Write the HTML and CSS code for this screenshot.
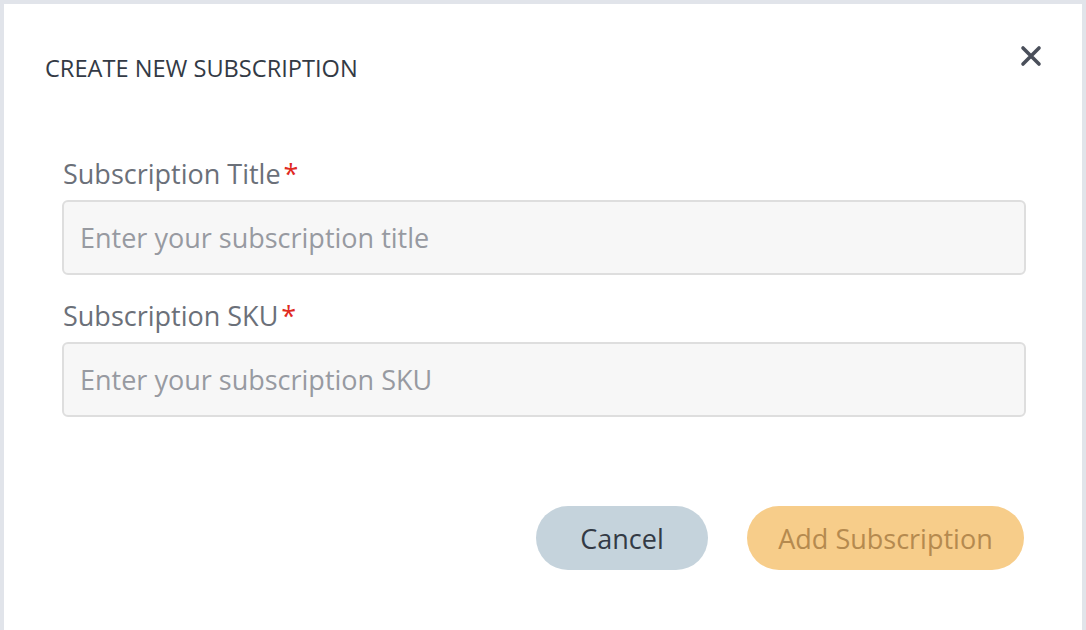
FILE: index.html
```html
<!DOCTYPE html>
<html>
<head>
<meta charset="utf-8">
<link rel="stylesheet" href="styles.css">
</head>
<body>
<div class="frame">
  <div class="modal">
    <div class="header">
      <h1 class="title">CREATE NEW SUBSCRIPTION</h1>
      <button class="close" aria-label="Close">
        <svg width="22" height="22" viewBox="0 0 22 22"><path d="M3 3 L19 19 M19 3 L3 19" stroke="#4a4f5a" stroke-width="3.6" stroke-linecap="round"/></svg>
      </button>
    </div>
    <form class="form">
      <div class="field">
        <label class="label">Subscription Title<span class="req">*</span></label>
        <input class="input" type="text" placeholder="Enter your subscription title">
      </div>
      <div class="field">
        <label class="label">Subscription SKU<span class="req">*</span></label>
        <input class="input" type="text" placeholder="Enter your subscription SKU">
      </div>
      <div class="actions">
        <button type="button" class="btn cancel">Cancel</button>
        <button type="button" class="btn add">Add Subscription</button>
      </div>
    </form>
  </div>
</div>
</body>
</html>
```
FILE: styles.css
```css
html, body {
  margin: 0;
  padding: 0;
  height: 100%;
}
body {
  background: #e1e4ea;
  font-family: "Open Sans", "Noto Sans", sans-serif;
}
.frame {
  height: 100%;
  box-sizing: border-box;
  padding: 4px 4px 0 4px;
}
.modal {
  background: #fff;
  height: 100%;
  box-sizing: border-box;
}
.header {
  display: flex;
  justify-content: space-between;
  align-items: flex-start;
  padding: 50px 40px 0 41px;
}
.title {
  margin: 0;
  font-size: 23.6px;
  font-weight: 400;
  color: #333a45;
  line-height: 28px;
}
.close {
  border: 0;
  background: none;
  padding: 0;
  width: 22px;
  height: 22px;
  margin-top: -9px;
  display: block;
}
.close svg {
  display: block;
}
.form {
  padding: 74px 56px 0 58px;
}
.field {
  display: flex;
  flex-direction: column;
  margin-bottom: 23px;
}
.label {
  font-size: 27px;
  color: #6b7079;
  line-height: 36px;
  margin-bottom: 8px;
  padding-left: 1px;
}
.req {
  color: #e02a1f;
  margin-left: 3px;
}
.input {
  height: 75px;
  box-sizing: border-box;
  border: 2px solid #dedede;
  border-radius: 6px;
  background: #f7f7f7;
  padding: 0 16px;
  font-family: inherit;
  font-size: 27px;
  color: #333a45;
}
.input::placeholder {
  color: #979aa1;
}
.actions {
  display: flex;
  justify-content: flex-end;
  gap: 39px;
  margin-top: 89px;
  padding-right: 2px;
}
.btn {
  height: 64px;
  border: 0;
  border-radius: 32px;
  font-family: inherit;
  font-size: 27px;
  padding: 0;
}
.cancel {
  width: 172px;
  background: #c5d3dc;
  color: #333a45;
}
.add {
  width: 277px;
  background: #f7cd8a;
  color: #b58a4f;
}
```
